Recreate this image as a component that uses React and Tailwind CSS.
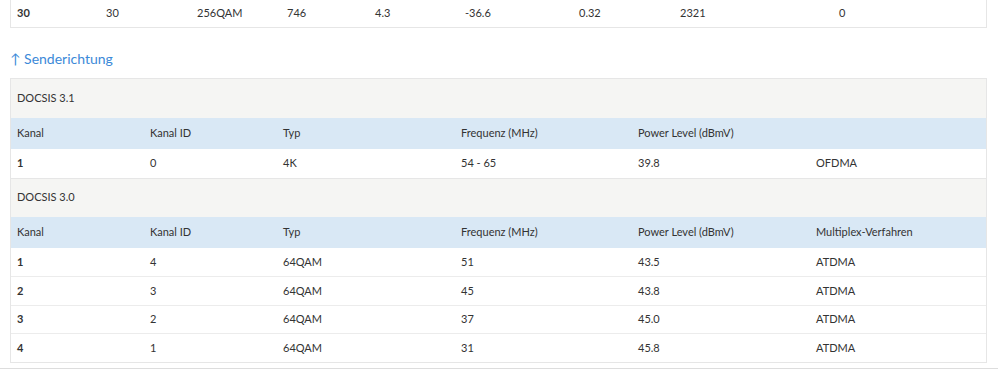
import React from "react";

const topRow = ["30", "30", "256QAM", "746", "4.3", "-36.6", "0.32", "2321", "0"];
const topCols = "grid grid-cols-[89px_91px_90px_88px_90px_114px_101px_159px_1fr]";
const cols = "grid grid-cols-[133px_133px_178px_177px_178px_1fr]";

const heads = ["Kanal", "Kanal ID", "Typ", "Frequenz (MHz)", "Power Level (dBmV)", "Multiplex-Verfahren"];

const d31 = [["1", "0", "4K", "54 - 65", "39.8", "OFDMA"]];
const d30 = [
    ["1", "4", "64QAM", "51", "43.5", "ATDMA"],
    ["2", "3", "64QAM", "45", "43.8", "ATDMA"],
    ["3", "2", "64QAM", "37", "45.0", "ATDMA"],
    ["4", "1", "64QAM", "31", "45.8", "ATDMA"],
];

const Group = ({ title, showLast, rows, first }) => (
    <>
        <div
            className={`h-[39px] flex items-center pl-[6px] bg-[#f5f5f3] ${first ? "" : "border-t border-[#e6e6e6]"}`}
        >
            {title}
        </div>
        <div className={`${cols} h-[31px] items-center pl-[6px] bg-[#d9e8f5]`}>
            {heads.map((h, i) => (
                <div key={h}>{i === 5 && !showLast ? "" : h}</div>
            ))}
        </div>
        {rows.map((r, idx) => (
            <div
                key={idx}
                className={`${cols} h-[28.5px] items-center pl-[6px] bg-white ${idx > 0 ? "border-t border-[#ececec]" : ""}`}
            >
                {r.map((c, i) => (
                    <div key={i} className={i === 0 ? "font-bold" : ""}>
                        {c}
                    </div>
                ))}
            </div>
        ))}
    </>
);

export default function App() {
    return (
        <div className="w-[998px] h-[374px] overflow-hidden bg-white font-['Lato',sans-serif] text-[11px] text-[#333]">
            <div className="pl-[10px] pr-[11px] pb-[5px] border-b border-[#dddddd]">
                <div className={`${topCols} -mt-px h-[29px] items-center pl-[6px] border border-[#e6e6e6] bg-white`}>
                    {topRow.map((c, i) => (
                        <div key={i} className={i === 0 ? "font-bold" : ""}>
                            {c}
                        </div>
                    ))}
                </div>
                <div className="h-[50px] flex items-center pt-[11px] text-[14px] text-[#3b89d8]">
                    ↑ Senderichtung
                </div>
                <div className="border border-[#e6e6e6]">
                    <Group title="DOCSIS 3.1" rows={d31} showLast={false} first />
                    <Group title="DOCSIS 3.0" rows={d30} showLast />
                </div>
            </div>
        </div>
    );
}
